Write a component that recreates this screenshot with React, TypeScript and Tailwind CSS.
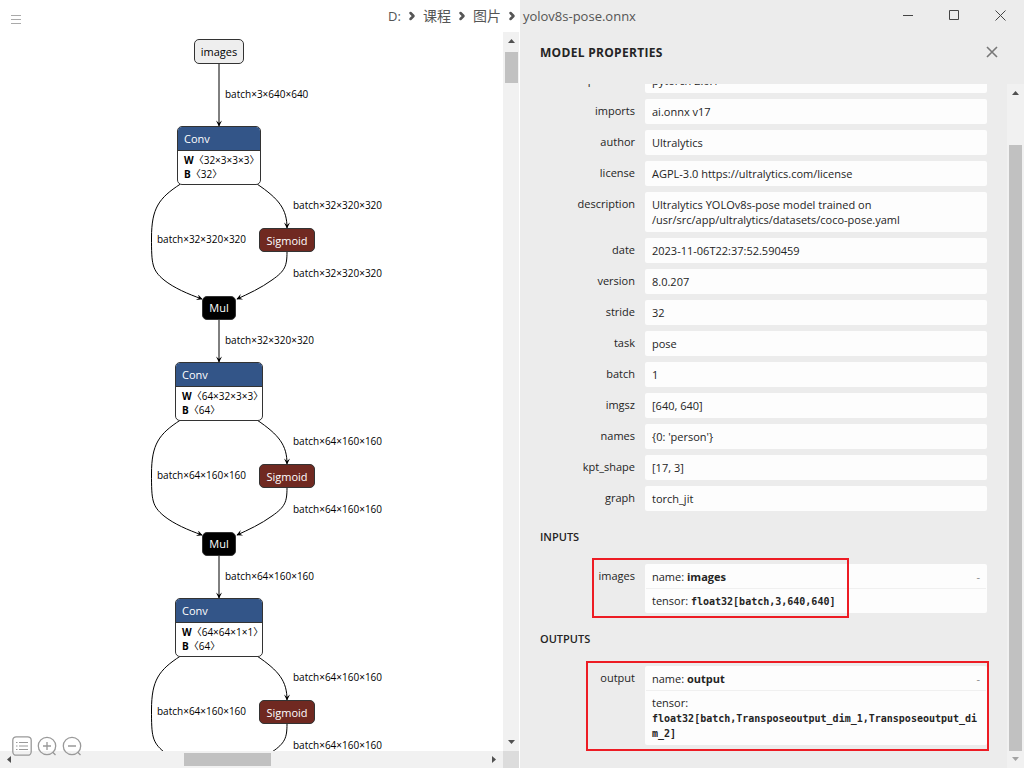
import { ChevronRight } from "lucide-react";
import clsx from "clsx";

type Property = { name: string; value: string };

const properties: Property[] = [
  { name: "producer", value: "pytorch 2.0.1" },
  { name: "imports", value: "ai.onnx v17" },
  { name: "author", value: "Ultralytics" },
  { name: "license", value: "AGPL-3.0 https://ultralytics.com/license" },
  { name: "description", value: "Ultralytics YOLOv8s-pose model trained on /usr/src/app/ultralytics/datasets/coco-pose.yaml" },
  { name: "date", value: "2023-11-06T22:37:52.590459" },
  { name: "version", value: "8.0.207" },
  { name: "stride", value: "32" },
  { name: "task", value: "pose" },
  { name: "batch", value: "1" },
  { name: "imgsz", value: "[640, 640]" },
  { name: "names", value: "{0: 'person'}" },
  { name: "kpt_shape", value: "[17, 3]" },
  { name: "graph", value: "torch_jit" },
];

const blocks = [
  { top: 94, weight: "32×3×3×3", bias: "32", shape: "batch×32×320×320", wide: false },
  { top: 330, weight: "64×32×3×3", bias: "64", shape: "batch×64×160×160", wide: true },
  { top: 566, weight: "64×64×1×1", bias: "64", shape: "batch×64×160×160", wide: true },
];

function EdgeLabel({ className, children }: { className: string; children: string }) {
  return <span className={clsx("absolute whitespace-nowrap text-[10px] leading-3", className)}>{children}</span>;
}

function Block({ block }: { block: (typeof blocks)[number] }) {
  const { top, weight, bias, shape, wide } = block;
  return (
    <div className="absolute left-0" style={{ top }}>
      <svg className="absolute left-0 top-0 overflow-visible" width="400" height="236" fill="none" stroke="#000" aria-hidden="true">
        <path d="M180.5 58C159 72 151.5 82 151.5 112C151.5 138 152 144 164 154C174 162 188 168 202 173" markerEnd="url(#arrow)" />
        <path d="M257 58C279 73 287 83 287 102" markerEnd="url(#arrow)" />
        <path d="M287 126C287 140 285 145 272 154C261 162 248 168 237 173" markerEnd="url(#arrow)" />
        <path d="M219 194V236" markerEnd="url(#arrow)" />
      </svg>
      <div
        className={clsx(
          "absolute top-0 h-[59px] overflow-hidden rounded-[5px] border border-[#333] bg-white",
          wide ? "left-[175px] w-[88px]" : "left-[177px] w-[84px]",
        )}
      >
        <div className="h-6 border-b border-[#333] bg-[#335588] px-[6px] text-[11px] leading-6 text-white">Conv</div>
        <div className="px-[6px] pt-[2px] text-[10px] leading-[14px] whitespace-nowrap">
          <p><b>W</b>〈{weight}〉</p>
          <p><b>B</b>〈{bias}〉</p>
        </div>
      </div>
      <EdgeLabel className="left-[293px] top-[73px]">{shape}</EdgeLabel>
      <EdgeLabel className="left-[157px] top-[107px]">{shape}</EdgeLabel>
      <div className="absolute left-[259px] top-[102px] h-6 w-14 rounded-[5px] border border-[#333] bg-[#702921] text-center text-[11px] leading-6 text-white">
        Sigmoid
      </div>
      <EdgeLabel className="left-[293px] top-[141px]">{shape}</EdgeLabel>
      <div className="absolute left-[202px] top-[170px] h-6 w-[34px] rounded-[5px] border border-[#333] bg-black text-center text-[11px] leading-[22px] text-white">
        Mul
      </div>
      <EdgeLabel className="left-[225px] top-[208px]">{shape}</EdgeLabel>
    </div>
  );
}

function Graph() {
  return (
    <div className="relative min-w-0 flex-1 overflow-hidden">
      <svg className="absolute left-0 top-0 overflow-visible" width="400" height="94" fill="none" stroke="#000" aria-hidden="true">
        <defs>
          <marker id="arrow" viewBox="0 0 10 10" refX="9" refY="5" markerUnits="strokeWidth" markerWidth="8" markerHeight="6" orient="auto">
            <path d="M0 0L10 5L0 10L4 5z" fill="#000" stroke="none" />
          </marker>
        </defs>
        <path d="M219 32V94" markerEnd="url(#arrow)" />
      </svg>
      <div className="absolute left-[194px] top-[7px] h-[25px] w-[50px] rounded-[5px] border border-[#333] bg-[#eee] text-center text-[11px] leading-6">
        images
      </div>
      <EdgeLabel className="left-[225px] top-[56px]">batch×3×640×640</EdgeLabel>
      {blocks.map((block) => (
        <Block key={block.top} block={block} />
      ))}
    </div>
  );
}

function Arrow({ direction, muted }: { direction: "up" | "down" | "left" | "right"; muted?: boolean }) {
  return (
    <svg
      className={clsx(
        "size-[17px] shrink-0",
        direction === "right" && "rotate-90",
        direction === "down" && "rotate-180",
        direction === "left" && "-rotate-90",
      )}
      viewBox="0 0 17 17"
      fill={muted ? "#a3a3a3" : "#505050"}
      aria-hidden="true"
    >
      <path d="M5 11L8.5 7L12 11z" />
    </svg>
  );
}

function Toolbar() {
  return (
    <div className="absolute bottom-[11px] left-3 flex gap-1">
      <button type="button" aria-label="Model properties">
        <svg className="size-[21px]" viewBox="0 0 21 21" fill="none" stroke="#999" aria-hidden="true">
          <rect x="0.8" y="0.8" width="18.4" height="18.4" rx="3.5" strokeWidth="1.3" />
          <path d="M7 6.5H16M7 10H16M7 13.5H16M4 6.5H5.5M4 10H5.5M4 13.5H5.5" />
        </svg>
      </button>
      <button type="button" aria-label="Zoom in">
        <svg className="size-[21px]" viewBox="0 0 21 21" fill="none" stroke="#999" strokeWidth="1.3" aria-hidden="true">
          <circle cx="10" cy="10" r="8.7" />
          <path d="M6 10H14M10 6V14M15.5 16L18.5 19" />
        </svg>
      </button>
      <button type="button" aria-label="Zoom out">
        <svg className="size-[21px]" viewBox="0 0 21 21" fill="none" stroke="#999" strokeWidth="1.3" aria-hidden="true">
          <circle cx="10" cy="10" r="8.7" />
          <path d="M6 10H14M15.5 16L18.5 19" />
        </svg>
      </button>
    </div>
  );
}

function Separator() {
  return <ChevronRight className="mx-px size-3" strokeWidth={5} />;
}

function TitleBar() {
  return (
    <header className="absolute inset-x-0 top-0 flex h-8 justify-center text-[#555]">
      <button type="button" aria-label="Menu" className="absolute left-[11px] top-[14px]">
        <svg className="h-[11px] w-[10px]" viewBox="0 0 10 11" stroke="#aaa" aria-hidden="true">
          <path d="M0 1.5H10M0 5.5H10M0 9.5H10" />
        </svg>
      </button>
      <h1 className="flex items-center gap-1 text-[13px] leading-8">
        <span>D:</span>
        <Separator />
        <span className="text-[14px]">课程</span>
        <Separator />
        <span className="text-[14px]">图片</span>
        <Separator />
        <span>yolov8s-pose.onnx</span>
      </h1>
      <div className="absolute right-px top-0 flex h-[30px] text-[#444]">
        <button type="button" aria-label="Minimize" className="grid w-[46px] place-items-center">
          <svg className="size-[11px]" viewBox="0 0 11 11" stroke="currentColor"><path d="M0 5.5H10" /></svg>
        </button>
        <button type="button" aria-label="Maximize" className="grid w-[46px] place-items-center">
          <svg className="size-[11px]" viewBox="0 0 11 11" fill="none" stroke="currentColor"><path d="M.5 .5H9.5V9.5H.5z" /></svg>
        </button>
        <button type="button" aria-label="Close window" className="grid w-[46px] place-items-center">
          <svg className="size-[11px]" viewBox="0 0 11 11" stroke="currentColor"><path d="M.5 .5L10.5 10.5M10.5 .5L.5 10.5" /></svg>
        </button>
      </div>
    </header>
  );
}

function PropertyRow({ name, value }: Property) {
  return (
    <div className="flex gap-[10px]">
      <dt className="w-[95px] shrink-0 pt-1 text-right">{name}</dt>
      <dd className="min-w-0 flex-1 rounded-[2px] bg-[#fdfdfd] px-[7px] py-[5px]">{value}</dd>
    </div>
  );
}

function ArgumentRow({ name, tensor, mark }: { name: string; tensor: string; mark: string }) {
  return (
    <div className="relative flex gap-[10px]">
      <dt className="w-[95px] shrink-0 pt-1 text-right">{name}</dt>
      <dd className="min-w-0 flex-1 rounded-[2px] bg-[#fdfdfd]">
        <div className="mx-px flex justify-between border-b border-[#f0f0f0] px-[6px] pb-1 pt-[5px]">
          <p>name: <b>{name}</b></p>
          <button type="button" aria-label={`Collapse ${name}`} className="text-[#888]">-</button>
        </div>
        <p className="break-words px-[7px] pb-[5px] pt-1">
          tensor: <code className="font-['DejaVu_Sans_Mono',monospace] text-[10px] font-bold leading-none">{tensor}</code>
        </p>
      </dd>
      <div className={clsx("pointer-events-none absolute border-2 border-[#ed1c24]", mark)} />
    </div>
  );
}

function Sidebar() {
  return (
    <aside className="flex w-[min(60%,504px)] shrink-0 flex-col bg-[#ececec] pt-8 text-[11px] leading-[15px] text-[#242424]">
      <div className="flex h-[52px] shrink-0 items-start justify-between px-5 pt-3">
        <h2 className="pt-px text-[12px] font-bold leading-4 tracking-wide">MODEL PROPERTIES</h2>
        <button type="button" aria-label="Close sidebar" className="p-[6px] pt-0.5">
          <svg className="size-[12px]" viewBox="0 0 12 12" stroke="#777" strokeWidth="1.6" aria-hidden="true"><path d="M1 1L11 11M11 1L1 11" /></svg>
        </button>
      </div>
      <div className="flex min-h-0 flex-1">
        <div className="min-w-0 flex-1 overflow-hidden px-5">
          <dl className="-mt-4 flex flex-col gap-[6px]">
            {properties.map((p) => (
              <PropertyRow key={p.name} {...p} />
            ))}
          </dl>
          <h3 className="mb-5 mt-[18px] font-semibold">INPUTS</h3>
          <dl>
            <ArgumentRow name="images" tensor="float32[batch,3,640,640]" mark="-top-[6px] left-[52px] h-[60px] w-[257px]" />
          </dl>
          <h3 className="mb-5 mt-[18px] font-semibold">OUTPUTS</h3>
          <dl>
            <ArgumentRow
              name="output"
              tensor="float32[batch,Transposeoutput_dim_1,Transposeoutput_dim_2]"
              mark="-top-[5px] -bottom-[6px] left-[46px] -right-[2px]"
            />
          </dl>
        </div>
        <div className="flex w-[17px] flex-col items-center bg-[#f1f1f1]">
          <Arrow direction="up" />
          <div className="mt-11 w-[13px] flex-1 bg-[#c1c1c1]" />
          <Arrow direction="down" muted />
        </div>
      </div>
    </aside>
  );
}

export default function App() {
  return (
    <div className="relative flex h-screen overflow-hidden bg-white font-['Open_Sans','Noto_Sans_CJK_SC',sans-serif] text-black">
      <main className="relative flex min-w-0 flex-1 flex-col pt-8">
        <div className="flex min-h-0 flex-1">
          <Graph />
          <div className="mr-px flex w-4 flex-col items-center bg-[#f1f1f1]">
            <Arrow direction="up" />
            <div className="mt-[3px] h-[31px] w-[13px] bg-[#c1c1c1]" />
            <div className="mt-auto flex"><Arrow direction="down" /></div>
          </div>
        </div>
        <div className="mr-px flex h-[17px] bg-[#dcdcdc]">
          <div className="flex flex-1 items-center bg-[#f1f1f1]">
            <Arrow direction="left" />
            <div className="flex flex-1">
              <div className="w-[167px]" />
              <div className="h-[13px] w-[87px] bg-[#c1c1c1]" />
            </div>
            <Arrow direction="right" />
          </div>
          <div className="w-4" />
        </div>
        <Toolbar />
      </main>
      <Sidebar />
      <TitleBar />
    </div>
  );
}
